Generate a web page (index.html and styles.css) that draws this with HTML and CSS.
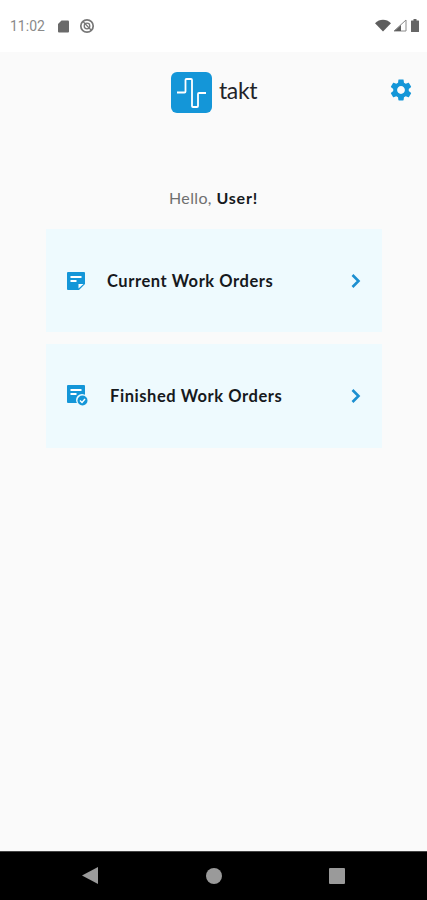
FILE: index.html
```html
<!DOCTYPE html>
<html lang="en">
<head>
<meta charset="utf-8">
<title>takt</title>
<link rel="stylesheet" href="styles.css">
</head>
<body>
<div class="screen">
  <div class="status">
    <div class="status-left">
      <span class="time">11:02</span>
      <svg class="st-sd" width="13" height="13" viewBox="0 0 13 13"><path d="M4.500 0.500H11a1 1 0 0 1 1 1v10a1 1 0 0 1-1 1H2a1 1 0 0 1-1-1V4z" fill="#6a6a6a"/></svg>
      <svg class="st-sync" width="16" height="16" viewBox="0 0 16 16"><circle cx="8" cy="8" r="6.200" fill="none" stroke="#777" stroke-width="1.700"/><circle cx="8" cy="8" r="2.800" fill="none" stroke="#777" stroke-width="1.300"/><path d="M4 3.500l8.500 9" stroke="#777" stroke-width="1.200"/></svg>
    </div>
    <div class="status-right">
      <svg width="16" height="13" viewBox="0 0 16 13"><path d="M0 4.200C4.500-.4 11.500-.4 16 4.200L8 12.500z" fill="#5e5e5e"/></svg>
      <svg class="st-signal" width="14" height="13" viewBox="0 0 14 13"><path d="M13 1v11H1z" fill="none" stroke="#8a8a8a" stroke-width="1"/><path d="M8 6v6H1.500z" fill="#5e5e5e"/></svg>
      <svg class="st-batt" width="8" height="13" viewBox="0 0 8 13"><path d="M2.500 0h3v1.500H7.500a.5.500 0 0 1 .5.500v10.500a.5.500 0 0 1-.5.500h-7a.5.500 0 0 1-.5-.5V2a.5.500 0 0 1 .5-.5h2z" fill="#666"/></svg>
    </div>
  </div>
  <main class="app">
    <header class="header">
      <div class="brand">
        <svg class="logo" width="41" height="41" viewBox="0 0 41 41"><rect width="41" height="41" rx="6" fill="#1496d8"/><path d="M6 20.500H13.500a1 1 0 0 0 1-1V8a1 1 0 0 1 1-1H20a1 1 0 0 1 1 1V34a1 1 0 0 0 1 1h4a1 1 0 0 0 1-1V22a1 1 0 0 1 1-1H35" fill="none" stroke="#fff" stroke-width="1.800"/></svg>
        <span class="wordmark">takt</span>
      </div>
      <svg class="gear" width="26" height="26" viewBox="0 0 24 24"><path fill="#1496d8" d="M19.140 12.940c.04-.3.06-.61.06-.94 0-.32-.02-.64-.07-.94l2.030-1.580c.18-.14.23-.41.12-.61l-1.920-3.320c-.12-.22-.37-.29-.59-.22l-2.390.96c-.5-.38-1.030-.7-1.620-.94l-.36-2.540c-.04-.24-.24-.41-.48-.41h-3.840c-.24 0-.43.17-.47.41l-.36 2.540c-.59.24-1.130.57-1.620.94l-2.390-.96c-.22-.08-.47 0-.59.22L2.740 8.870c-.12.21-.08.47.12.61l2.030 1.580c-.05.3-.09.63-.09.94s.02.64.07.94l-2.030 1.580c-.18.14-.23.41-.12.61l1.920 3.320c.12.22.37.29.59.22l2.390-.96c.5.38 1.030.7 1.620.94l.36 2.540c.05.24.24.41.48.41h3.840c.24 0 .44-.17.47-.41l.36-2.540c.59-.24 1.130-.56 1.620-.94l2.390.96c.22.08.47 0 .59-.22l1.920-3.320c.12-.22.07-.47-.12-.61l-2.010-1.580zM12 15.600c-1.980 0-3.600-1.620-3.600-3.600s1.620-3.600 3.600-3.600 3.600 1.620 3.600 3.600-1.620 3.600-3.600 3.600z"/></svg>
    </header>
    <p class="hello"><span class="hello-word">Hello,</span> <strong>User!</strong></p>
    <section class="cards">
      <a class="card">
        <svg class="card-icon" width="20" height="20" viewBox="0 0 20 20"><path d="M2 1h16a1 1 0 0 1 1 1v11l-6 6H2a1 1 0 0 1-1-1V2a1 1 0 0 1 1-1z" fill="#1496d8"/><path d="M4.500 6h11M4.500 10h6" stroke="#fff" stroke-width="2"/><path d="M12.500 17.500v-4.500h5z" fill="#fff"/></svg>
        <span class="card-label">Current Work Orders</span>
        <svg class="chev" width="12" height="16" viewBox="0 0 12 16"><path d="M2.500 2l6 6-6 6" fill="none" stroke="#1c8fd0" stroke-width="2.600"/></svg>
      </a>
      <a class="card card-finished">
        <svg class="card-icon" width="22" height="22" viewBox="0 0 22 22"><path d="M2 1h16a1 1 0 0 1 1 1v17H2a1 1 0 0 1-1-1V2a1 1 0 0 1 1-1z" fill="#1496d8"/><path d="M4.500 6h11M4.500 10h6" stroke="#fff" stroke-width="2"/><circle cx="16" cy="16" r="6" fill="#eefafe"/><circle cx="16.500" cy="16.500" r="5" fill="#1496d8"/><path d="M14 16.500l2 2 3-3.500" fill="none" stroke="#fff" stroke-width="1.400"/></svg>
        <span class="card-label">Finished Work Orders</span>
        <svg class="chev" width="12" height="16" viewBox="0 0 12 16"><path d="M2.500 2l6 6-6 6" fill="none" stroke="#1c8fd0" stroke-width="2.600"/></svg>
      </a>
    </section>
  </main>
  <nav class="navbar">
    <svg width="16" height="17" viewBox="0 0 16 17"><path d="M16 0v17L0 8.500z" fill="#9a9a9a"/></svg>
    <svg width="16" height="16" viewBox="0 0 16 16"><circle cx="8" cy="8" r="8" fill="#9a9a9a"/></svg>
    <svg width="16" height="16" viewBox="0 0 16 16"><rect width="16" height="16" rx="1" fill="#9a9a9a"/></svg>
  </nav>
</div>
</body>
</html>
```
FILE: styles.css
```css
* { box-sizing: border-box; }
html, body { margin: 0; padding: 0; }
body { font-family: "Lato", "Liberation Sans", sans-serif; background: #fafafa; }
.screen { width: 427px; height: 900px; display: flex; flex-direction: column; overflow: hidden; }
.status { height: 52px; background: #fff; display: flex; justify-content: space-between; align-items: center; padding: 0 8px 0 10px; flex: none; }
.status-left, .status-right { display: flex; align-items: center; }
.status-left { gap: 9px; }
.status-right { gap: 3px; margin-top: -1px; }
.time { font: 14px "Roboto", sans-serif; color: #8a8a8a; width: 36px; }
.st-sd { margin-left: 2px; }
.st-signal { margin-left: -1px; }
.st-batt { margin-left: 1px; }
.app { flex: 1; background: #fafafa; display: flex; flex-direction: column; }
.header { position: relative; height: 78px; padding-top: 20px; display: flex; justify-content: center; }
.brand { display: flex; align-items: flex-start; gap: 7px; margin-left: 1px; }
.logo { display: block; }
.wordmark { font: 400 23px/1 "Lato", sans-serif; color: #1f2328; margin-top: 7px; letter-spacing: -0.4px; width: 38px; }
.gear { position: absolute; right: 13px; top: 25px; }
.hello { margin: 58px 0 0; height: 20px; text-align: center; font-size: 16px; line-height: 20px; font-weight: 400; letter-spacing: 0.5px; }
.hello-word { color: #6f6f6f; letter-spacing: 0.35px; }
.hello strong { font-weight: 700; color: #16191d; letter-spacing: 0.8px; }
.cards { margin: 21px 45px 0 46px; display: flex; flex-direction: column; gap: 12px; }
.card { height: 103px; background: #eefafe; display: flex; align-items: center; padding: 0 20px; color: #16191d; }
.card-finished { height: 104px; padding-bottom: 2px; }
.card-icon { flex: none; display: block; }
.card-label { flex: 1; margin-left: 21px; font-size: 16.500px; font-weight: 700; letter-spacing: 0.56px; white-space: nowrap; }
.card-finished .card-label { margin: 2px 0 0 22px; }
.card-finished .chev { margin-top: 2px; }
.chev { flex: none; display: block; }
.navbar { height: 49px; flex: none; background: #000; display: flex; align-items: center; justify-content: space-between; padding: 0 82px 1px 82px; border-top: 1px solid #444; }
```
